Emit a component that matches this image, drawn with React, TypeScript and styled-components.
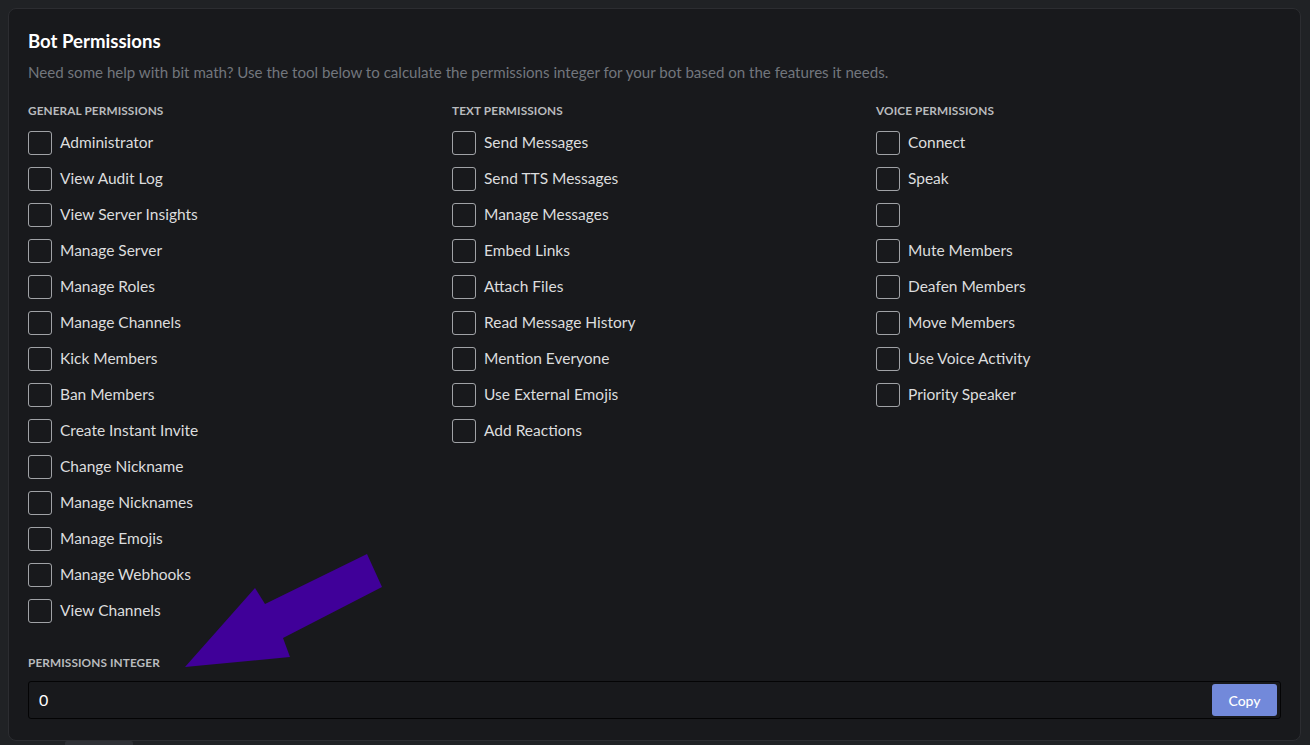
import React from "react";
import styled, { createGlobalStyle } from "styled-components";

const Global = createGlobalStyle`
  html, body { margin: 0; padding: 0; background: #202225; }
  body { font-family: "Lato", "Noto Sans", sans-serif; }
  * { box-sizing: border-box; }
`;

const Page = styled.div`
  width: 1310px;
  height: 745px;
  padding: 8px 9px 0 8px;
  position: relative;
  overflow: hidden;
`;

const Panel = styled.section`
  background: #18191c;
  border: 1px solid #2c2d31;
  border-radius: 8px;
  padding: 20px 19px 21px 19px;
  height: 733px;
  display: flex;
  flex-direction: column;
`;

const Title = styled.h2`
  margin: 0;
  font-size: 18.6px;
  line-height: 24px;
  font-weight: 700;
  color: #ffffff;
`;

const Description = styled.p`
  margin: 10px 0 0;
  font-size: 15.1px;
  line-height: 18px;
  color: #72767d;
`;

const Columns = styled.div`
  display: grid;
  grid-template-columns: 424px 424px 1fr;
  margin-top: 22px;
  flex: 1;
`;

const Column = styled.div`
  display: flex;
  flex-direction: column;
  gap: 12px;
`;

const Heading = styled.h3`
  margin: 0;
  font-size: 11.8px;
  line-height: 16px;
  font-weight: 700;
  letter-spacing: 0.1px;
  text-transform: uppercase;
  color: #b9bbbe;
`;

const Row = styled.label`
  display: flex;
  align-items: center;
  gap: 8px;
  height: 24px;
  font-size: 15.5px;
  line-height: 20px;
  color: #dcddde;
`;

const RowText = styled.span`
  padding-bottom: 3px;
`;

const Box = styled.span`
  width: 24px;
  height: 24px;
  border: 1px solid #b9bbbe;
  border-radius: 3px;
  flex: none;
  opacity: 0.85;
`;

const IntegerLabel = styled(Heading)`
  margin-bottom: 10px;
`;

const InputWrap = styled.div`
  display: flex;
  align-items: center;
  height: 38px;
  border: 1px solid #040405;
  border-radius: 3px;
  background: #18191c;
  padding: 0 3px 1px 10px;
`;

const Value = styled.span`
  flex: 1;
  font-size: 16px;
  color: #ffffff;
`;

const CopyButton = styled.button`
  width: 65px;
  height: 32px;
  border: none;
  border-radius: 3px;
  background: #7289da;
  color: #ffffff;
  font-family: inherit;
  font-size: 14px;
  font-weight: 500;
  margin-top: 1px;
`;

const Arrow = styled.svg`
  position: absolute;
  left: 0;
  top: 0;
  pointer-events: none;
`;

const ScrollHint = styled.div`
  position: absolute;
  left: 65px;
  top: 741px;
  width: 68px;
  height: 4px;
  background: #2f3136;
  border-radius: 2px 2px 0 0;
`;

const general = [
  "Administrator", "View Audit Log", "View Server Insights", "Manage Server",
  "Manage Roles", "Manage Channels", "Kick Members", "Ban Members",
  "Create Instant Invite", "Change Nickname", "Manage Nicknames",
  "Manage Emojis", "Manage Webhooks", "View Channels",
];
const text = [
  "Send Messages", "Send TTS Messages", "Manage Messages", "Embed Links",
  "Attach Files", "Read Message History", "Mention Everyone",
  "Use External Emojis", "Add Reactions",
];
const voice = [
  "Connect", "Speak", "", "Mute Members", "Deafen Members", "Move Members",
  "Use Voice Activity", "Priority Speaker",
];

const Group = ({ title, items }: { title: string; items: string[] }) => (
  <Column>
    <Heading>{title}</Heading>
    {items.map((it, i) => (
      <Row key={i}>
        <Box />
        <RowText>{it}</RowText>
      </Row>
    ))}
  </Column>
);

export default function App() {
  return (
    <Page>
      <Global />
      <Panel>
        <Title>Bot Permissions</Title>
        <Description>
          Need some help with bit math? Use the tool below to calculate the permissions integer for your bot based on the features it needs.
        </Description>
        <Columns>
          <Group title="General Permissions" items={general} />
          <Group title="Text Permissions" items={text} />
          <Group title="Voice Permissions" items={voice} />
        </Columns>
        <IntegerLabel>Permissions Integer</IntegerLabel>
        <InputWrap>
          <Value>0</Value>
          <CopyButton>Copy</CopyButton>
        </InputWrap>
      </Panel>
      <ScrollHint />
      <Arrow width="1310" height="745" viewBox="0 0 1310 745">
        <polygon
          points="185,667 255,588 265,604 367,554 382,587 283,638 290,657"
          fill="#400099"
        />
      </Arrow>
    </Page>
  );
}
